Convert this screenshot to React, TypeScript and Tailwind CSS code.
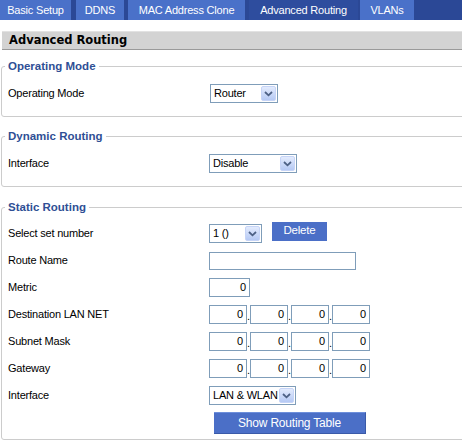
import { Fragment } from 'react'

const tabs = [
  { name: 'Basic Setup', w: 'w-[71px]', ml: 'ml-0' },
  { name: 'DDNS', w: 'w-[48px]', ml: 'ml-[5px]' },
  { name: 'MAC Address Clone', w: 'w-[117px]', ml: 'ml-[4px]' },
  { name: 'Advanced Routing', w: 'w-[109px]', ml: 'ml-[4px]', active: true },
  { name: 'VLANs', w: 'w-[54px]', ml: 'ml-[2px]' },
]

function Arrow() {
  return (
    <span className="flex h-[15px] w-[15px] items-center justify-center rounded-[2px] border border-[#c6d4f7] bg-gradient-to-b from-[#e3ebfd] to-[#b5c9f4]">
      <svg width="9" height="6" viewBox="0 0 9 6">
        <path d="M1 1l3.5 3.3L8 1" stroke="#4d6185" strokeWidth="1.8" fill="none" />
      </svg>
    </span>
  )
}

function Select({ value, w }: { value: string; w: string }) {
  return (
    <div className={`flex h-[19px] items-center border border-[#7f9db9] bg-white pl-[3px] pr-px ${w}`}>
      <span className="flex-1 truncate whitespace-nowrap">{value}</span>
      <Arrow />
    </div>
  )
}

function Input({ value, w }: { value?: string; w: string }) {
  return (
    <div className={`flex h-[19px] items-center justify-end border border-[#7f9db9] bg-white pr-[3px] ${w}`}>
      {value}
    </div>
  )
}

function IpField() {
  return (
    <div className="flex items-end">
      {[0, 1, 2, 3].map((i) => (
        <Fragment key={i}>
          {i > 0 && <span className="w-[3px] pb-[2px] text-center leading-none">.</span>}
          <Input w="w-[38px]" value="0" />
        </Fragment>
      ))}
    </div>
  )
}

function Row({ label, children }: { label: string; children?: React.ReactNode }) {
  return (
    <div className="flex h-[27px] items-center">
      <div className="w-[201px] shrink-0">{label}</div>
      {children}
    </div>
  )
}

function Section({ title, className, children }: { title: string; className: string; children: React.ReactNode }) {
  return (
    <fieldset className={`ml-px w-[470px] rounded-[3px] border border-[#cccccc] pl-[6px] ${className}`}>
      <legend className="-ml-[3px] px-[3px] font-['Liberation_Sans',Arial,sans-serif] text-[11.5px] font-bold leading-[13px] tracking-normal text-[#2f4f95]">
        {title}
      </legend>
      {children}
    </fieldset>
  )
}

export default function App() {
  return (
    <div className="h-[442px] w-[462px] overflow-hidden bg-white font-['Liberation_Sans',Arial,sans-serif] text-[11px] tracking-[-0.2px] text-black">
      <div className="flex h-[20px] bg-[#2b4896] text-white">
        {tabs.map((t) => (
          <div
            key={t.name}
            className={`flex items-center justify-center whitespace-nowrap ${t.w} ${t.ml} ${t.active ? 'bg-[#2e4d9e]' : 'bg-[#4a71c9]'}`}
          >
            {t.name}
          </div>
        ))}
      </div>

      <div className="ml-[2px] mt-[11px] flex h-[19px] items-center border-t border-b border-t-[#e2e2e2] border-b-[#9a9a9a] bg-[#d3d3d3] pl-[7px] font-['DejaVu_Sans',Verdana,sans-serif] text-[11.5px] font-bold tracking-normal">
        Advanced Routing
      </div>

      <Section title="Operating Mode" className="mt-[10px] pt-[7px] pb-[9px]">
        <Row label="Operating Mode">
          <div className="ml-px">
            <Select value="Router" w="w-[68px]" />
          </div>
        </Row>
      </Section>

      <Section title="Dynamic Routing" className="mt-[13px] pt-[7px] pb-[9px]">
        <Row label="Interface">
          <Select value="Disable" w="w-[88px]" />
        </Row>
      </Section>

      <Section title="Static Routing" className="mt-[14px] pt-[6px] pb-[3px]">
        <Row label="Select set number">
          <Select value="1 ()" w="w-[53px]" />
          <button className="mb-[5px] ml-[10px] h-[19px] w-[55px] bg-[#4b6fc7] text-[11.5px] text-white">
            Delete
          </button>
        </Row>
        <Row label="Route Name">
          <div className="h-[18px] w-[147px] border border-[#7f9db9] bg-white" />
        </Row>
        <Row label="Metric">
          <Input w="w-[41px]" value="0" />
        </Row>
        <Row label="Destination LAN NET">
          <IpField />
        </Row>
        <Row label="Subnet Mask">
          <IpField />
        </Row>
        <Row label="Gateway">
          <IpField />
        </Row>
        <Row label="Interface">
          <Select value="LAN & WLAN" w="w-[87px]" />
        </Row>
        <div className="flex h-[27px] items-center pl-[206px]">
          <button className="h-[22px] w-[152px] border-t border-r border-b border-t-[#6d8fdb] border-r-[#3a5aa8] border-b-[#3a5aa8] bg-[#4b6fc7] text-[12px] text-white">
            Show Routing Table
          </button>
        </div>
      </Section>
    </div>
  )
}
